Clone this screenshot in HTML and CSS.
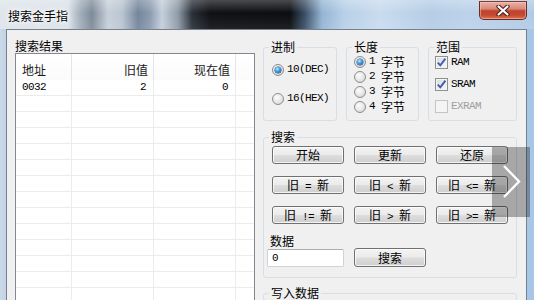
FILE: index.html
```html
<!DOCTYPE html>
<html lang="zh-CN">
<head>
<meta charset="utf-8">
<title>搜索金手指</title>
<link rel="stylesheet" href="styles.css">
</head>
<body>
<div class="window">
  <header class="titlebar">
    <span class="title">搜索金手指</span>
    <button class="close" aria-label="关闭">
      <svg width="14" height="11" viewBox="0 0 14 11">
        <path d="M2.5 1.5 L11.5 9.5 M11.5 1.5 L2.5 9.5" stroke="#4b1c17" stroke-width="4.2" stroke-linecap="round"/>
        <path d="M2.5 1.5 L11.5 9.5 M11.5 1.5 L2.5 9.5" stroke="#fff" stroke-width="2.2" stroke-linecap="round"/>
      </svg>
    </button>
  </header>
  <div class="frame">
    <div class="client">
      <section class="results">
        <div class="label">搜索结果</div>
        <div class="list">
          <div class="list-head">
            <div class="th">地址</div>
            <div class="th r">旧值</div>
            <div class="th r">现在值</div>
            <div class="th"></div>
          </div>
          <div class="list-body">
            <div class="row">
              <div class="td m">0032</div>
              <div class="td r m">2</div>
              <div class="td r m">0</div>
              <div class="td"></div>
            </div>
          </div>
        </div>
      </section>

      <section class="controls">
        <div class="top-row">
          <fieldset class="group g-base">
            <legend>进制</legend>
            <div class="opts">
              <label class="opt"><span class="radio on"></span><span class="m">10(DEC)</span></label>
              <label class="opt"><span class="radio"></span><span class="m">16(HEX)</span></label>
            </div>
          </fieldset>
          <fieldset class="group g-len">
            <legend>长度</legend>
            <div class="opts">
              <label class="opt"><span class="radio on"></span><span class="m">1</span><span class="cjk">字节</span></label>
              <label class="opt"><span class="radio"></span><span class="m">2</span><span class="cjk">字节</span></label>
              <label class="opt"><span class="radio"></span><span class="m">3</span><span class="cjk">字节</span></label>
              <label class="opt"><span class="radio"></span><span class="m">4</span><span class="cjk">字节</span></label>
            </div>
          </fieldset>
          <fieldset class="group g-range">
            <legend>范围</legend>
            <div class="opts">
              <label class="opt"><span class="check"><svg width="11" height="11" viewBox="0 0 11 11"><path d="M1.8 5.6 L4.3 8.3 L9.4 1.6" fill="none" stroke="#3f5fa8" stroke-width="1.9"/></svg></span><span class="m">RAM</span></label>
              <label class="opt"><span class="check"><svg width="11" height="11" viewBox="0 0 11 11"><path d="M1.8 5.6 L4.3 8.3 L9.4 1.6" fill="none" stroke="#3f5fa8" stroke-width="1.9"/></svg></span><span class="m">SRAM</span></label>
              <label class="opt disabled"><span class="check off"></span><span class="m">EXRAM</span></label>
            </div>
          </fieldset>
        </div>

        <fieldset class="group g-search">
          <legend>搜索</legend>
          <div class="btn-grid">
            <button class="btn">开始</button>
            <button class="btn">更新</button>
            <button class="btn">还原</button>
            <button class="btn">旧<span class="m"> = </span>新</button>
            <button class="btn">旧<span class="m"> &lt; </span>新</button>
            <button class="btn">旧<span class="m"> &lt;= </span>新</button>
            <button class="btn">旧<span class="m"> != </span>新</button>
            <button class="btn">旧<span class="m"> &gt; </span>新</button>
            <button class="btn">旧<span class="m"> &gt;= </span>新</button>
          </div>
          <div class="data-label">数据</div>
          <div class="data-row">
            <input class="input" type="text" value="0">
            <button class="btn btn-tall">搜索</button>
          </div>
        </fieldset>

        <fieldset class="group g-write">
          <legend>写入数据</legend>
        </fieldset>
      </section>
    </div>
  </div>

  <div class="pager" aria-label="下一页">
    <svg width="38" height="70" viewBox="0 0 38 70">
      <polyline points="12,19 27,34.5 12,50" fill="none" stroke="#fff" stroke-width="2.4"/>
    </svg>
  </div>
</div>
</body>
</html>
```

FILE: styles.css
```css
* { box-sizing: border-box; }

body {
  margin: 0;
  overflow: hidden;
  font: 12px/15px "Noto Sans CJK SC", sans-serif;
  color: #000;
}

.m {
  font-family: "Liberation Mono", monospace;
  font-size: 11px;
  letter-spacing: -0.6px;
}

.window {
  position: relative;
  width: 534px;
  height: 300px;
  overflow: hidden;
  display: flex;
  flex-direction: column;
  background: #a8c6e6;
}

/* ---------- title bar ---------- */
.titlebar {
  flex: none;
  height: 29px;
  display: flex;
  align-items: flex-start;
  background:
    linear-gradient(rgba(255,255,255,0.25), rgba(255,255,255,0) 45%, rgba(255,255,255,0.08)),
    linear-gradient(90deg,
      #dfe5eb 0, #dbe2e9 68px, #a3afbb 80px, #7d8a98 92px, #c6d0da 108px,
      #b9c5d1 122px, #74859a 138px, #8b9bb0 150px, #c3cfdb 162px, #8e9aa6 178px,
      #2a3038 192px, #0e1014 210px, #0b0d10 290px, #3b5068 305px, #94b4d4 322px,
      #b8d0e8 345px, #c9dbee 380px, #b5cde6 430px, #bcd2ea 470px, #b0cae6 534px);
}

.title {
  padding: 8px 0 0 8px;
  line-height: 15px;
  color: #000;
  text-shadow: 0 0 3px #fff, 0 0 6px #fff, 0 0 9px rgba(255,255,255,0.8);
}

.close {
  margin: 1px 7px 0 auto;
  width: 48px;
  height: 19px;
  padding: 0;
  border: 1px solid #6b2a22;
  border-top-color: #8a3a30;
  border-radius: 0 0 5px 5px;
  background: linear-gradient(#eab1a6 0%, #d98b7a 40%, #c2432d 52%, #c44a32 78%, #dc7556 100%);
  box-shadow: inset 0 0 0 1px rgba(255,210,200,0.45);
  display: flex;
  align-items: center;
  justify-content: center;
}

/* ---------- frame / client ---------- */
.frame {
  flex: 1;
  min-height: 0;
  display: flex;
  padding: 0 7px 0 6px;
  background: linear-gradient(90deg, #cbd9e8 0, #c2d3e5 6px, #a8c6e6 6px);
}

.client {
  flex: 1;
  min-width: 0;
  display: flex;
  gap: 8px;
  padding: 8px 9px 0 8px;
  border: 1px solid #76818d;
  border-bottom: 0;
  background: #f0f0f0;
}

/* ---------- results list ---------- */
.results {
  flex: none;
  width: 240px;
  display: flex;
  flex-direction: column;
}

.label { line-height: 15px; }

.list {
  flex: 1;
  display: flex;
  flex-direction: column;
  border: 1px solid #828790;
  border-bottom: 0;
  background: #fff;
}

.list-head,
.row {
  display: grid;
  grid-template-columns: 56px 82px 82px 1fr;
}

.list-head {
  height: 26px;
  background: linear-gradient(#ffffff, #fbfbfb);
}

.th {
  padding: 8px 5px 0 6px;
  line-height: 15px;
  border-right: 1px solid #e5e5e5;
  color: #1a1a1a;
}
.th:last-child { border-right: 0; }

.r { text-align: right; }

.list-body {
  flex: 1;
  background:
    linear-gradient(90deg, transparent 55px, #ececec 55px 56px, transparent 56px 137px,
      #ececec 137px 138px, transparent 138px 219px, #ececec 219px 220px, transparent 220px),
    repeating-linear-gradient(180deg, transparent 0 15px, #ececec 15px 16px);
}

.td {
  height: 15px;
  line-height: 15px;
  padding: 0 8px 0 6px;
}

/* ---------- controls ---------- */
.controls {
  flex: none;
  width: 254px;
  margin-top: 2px;
  display: flex;
  flex-direction: column;
}

.top-row {
  display: flex;
  gap: 9px;
}

fieldset.group {
  margin: 0;
  padding: 0;
  min-width: 0;
  border: 1px solid #d5dfe5;
  border-radius: 3px;
}

legend {
  margin-left: 5px;
  padding: 0 2px;
  line-height: 14px;
}

.opts {
  display: flex;
  flex-direction: column;
}

.opt {
  display: flex;
  align-items: center;
  gap: 3px;
  height: 15px;
  white-space: nowrap;
}

.cjk { margin-left: 3px; }

fieldset.g-base { width: 74px; padding: 8px 0 14px 0; }
.g-base .opts { gap: 14px; padding-left: 8px; }

fieldset.g-len { width: 73px; padding: 0 0 6px 0; }
.g-len .opts { padding-left: 7px; }

fieldset.g-range { width: 89px; padding: 1px 0 6px 0; }
.g-range .opts { gap: 7px; padding-left: 6px; }

.radio {
  flex: none;
  width: 12px;
  height: 12px;
  border-radius: 50%;
  border: 1px solid #8b8e92;
  background: radial-gradient(circle at 40% 35%, #fdfdfd, #e6e6e6 55%, #c9c9c9 100%);
  display: flex;
  align-items: center;
  justify-content: center;
}

.radio.on::after {
  content: "";
  width: 6px;
  height: 6px;
  border-radius: 50%;
  background: radial-gradient(circle at 40% 35%, #c4ecff 0, #3b98dd 45%, #0c4d8f 100%);
  box-shadow: 0 0 0 0.5px #1c4f86;
}

.check {
  flex: none;
  width: 13px;
  height: 13px;
  border: 1px solid #8e8f8f;
  background: linear-gradient(135deg, #d6dbe1, #f7f8f9);
  box-shadow: inset 0 0 0 1px #f4f4f4;
  display: flex;
  align-items: center;
  justify-content: center;
}

.check.off {
  border-color: #c4c4c4;
  background: #f4f4f4;
  box-shadow: none;
}

.disabled { color: #a0a0a0; }

/* search group */
fieldset.g-search {
  margin-top: 9px;
  padding: 2px 0 10px 0;
}

.btn-grid {
  display: grid;
  grid-template-columns: repeat(3, 72px);
  column-gap: 10px;
  row-gap: 12px;
  margin-left: 8px;
}

.btn {
  height: 18px;
  padding: 0;
  border: 1px solid #707070;
  border-radius: 3px;
  background: linear-gradient(#f3f3f3 0%, #ebebeb 48%, #dddddd 52%, #cfcfcf 100%);
  box-shadow: inset 0 0 0 1px rgba(255,255,255,0.75);
  font: 12px/16px "Noto Sans CJK SC", sans-serif;
  color: #000;
  white-space: pre;
}

.btn-tall { width: 72px; height: 19px; }

.data-label {
  margin: 9px 0 0 6px;
  line-height: 15px;
}

.data-row {
  display: flex;
  align-items: center;
  gap: 10px;
  margin-left: 3px;
  height: 19px;
}

.input {
  width: 77px;
  height: 18px;
  margin: 1px 0 0 0;
  padding: 0 4px;
  border: 1px solid #cfd3d8;
  border-top-color: #abadb3;
  border-radius: 2px;
  background: #fff;
  font-family: "Liberation Mono", monospace;
  font-size: 11px;
  color: #000;
  outline: none;
}

fieldset.g-write {
  margin-top: 8px;
  height: 40px;
}

/* overlay pager arrow */
.pager {
  position: absolute;
  left: 492px;
  top: 147px;
  width: 38px;
  height: 70px;
  background: rgba(0,0,0,0.3);
}
.pager svg { display: block; }
```
